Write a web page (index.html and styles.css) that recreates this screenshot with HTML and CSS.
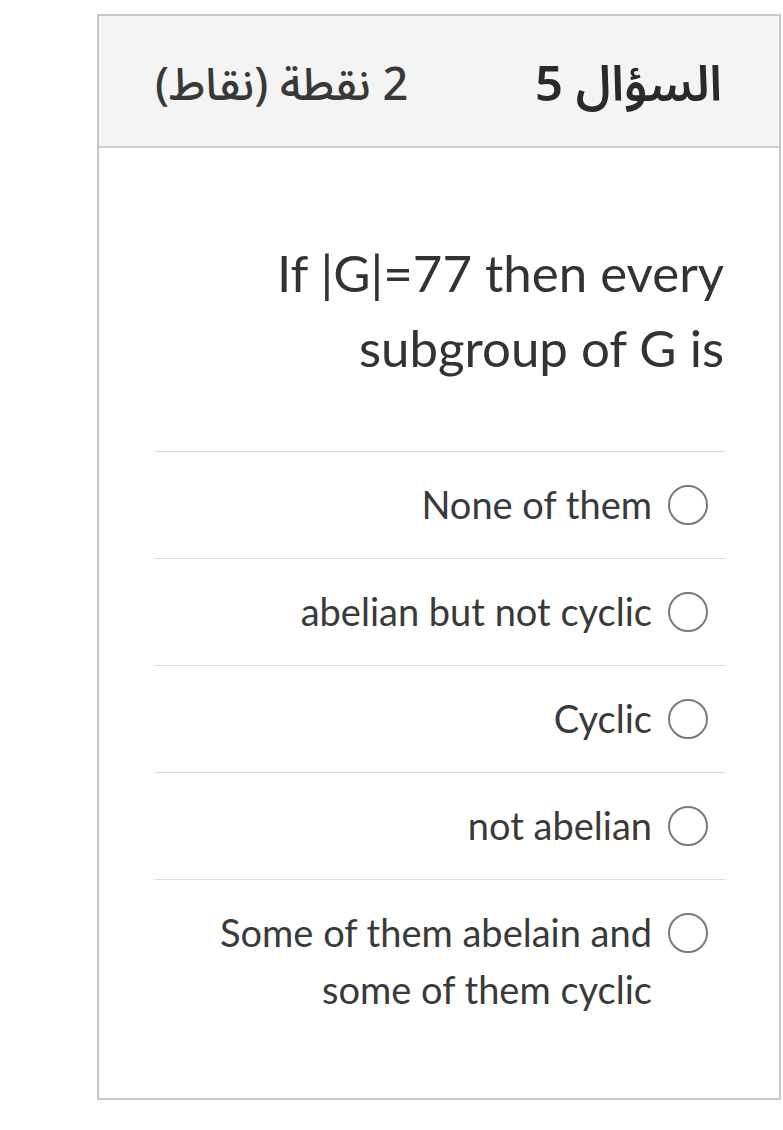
FILE: index.html
```html
<!DOCTYPE html>
<html lang="ar">
<head>
<meta charset="utf-8">
<link rel="stylesheet" href="styles.css">
</head>
<body>
<div class="page">
  <div class="card">
    <div class="card-header" dir="rtl">
      <div class="q-title">السؤال 5</div>
      <div class="q-points">2 نقطة (نقاط)</div>
    </div>
    <div class="card-body">
      <div class="question" dir="ltr">If |G|=77 then every<br>subgroup of G is</div>
      <div class="options">
        <label class="option"><span class="opt-text">None of them</span><span class="radio"></span></label>
        <label class="option"><span class="opt-text">abelian but not cyclic</span><span class="radio"></span></label>
        <label class="option"><span class="opt-text">Cyclic</span><span class="radio"></span></label>
        <label class="option"><span class="opt-text">not abelian</span><span class="radio"></span></label>
        <label class="option"><span class="opt-text">Some of them abelain and<br>some of them cyclic</span><span class="radio"></span></label>
      </div>
    </div>
  </div>
</div>
</body>
</html>
```

FILE: styles.css
```css
html, body {
  margin: 0;
  padding: 0;
  background: #ffffff;
}
.page {
  padding: 14px 2px 0 97px;
  font-family: "Lato", "Noto Sans Arabic", "DejaVu Sans", sans-serif;
  color: #333333;
}
.card {
  border: 2px solid #c8c8c8;
  background: #ffffff;
  height: 1086px;
  box-sizing: border-box;
}
.card-header {
  height: 132px;
  box-sizing: border-box;
  background: #f4f4f4;
  border-bottom: 2px solid #cfcfcf;
  display: flex;
  align-items: center;
  justify-content: space-between;
  padding: 8px 57px 0 56px;
  font-family: "Noto Sans Arabic", "DejaVu Sans", "Lato", sans-serif;
}
.q-title {
  font-size: 49px;
  font-weight: 600;
  color: #2a2a2a;
}
.q-points {
  font-size: 45px;
  font-weight: 500;
  color: #383838;
}
.card-body {
  padding: 0 54px 0 56px;
}
.question {
  padding-top: 87px;
  padding-right: 1px;
  margin-bottom: 66px;
  text-align: right;
  font-size: 51px;
  line-height: 75px;
  color: #333333;
}
.option {
  display: flex;
  justify-content: flex-end;
  align-items: flex-start;
  gap: 16px;
  border-top: 1px solid #dcdcdc;
  padding: 24px 17px 25px 0;
}
.opt-text {
  font-size: 38px;
  line-height: 57px;
  text-align: right;
  color: #3a3a3a;
}
.radio {
  flex: none;
  width: 40px;
  height: 40px;
  margin-top: 9px;
  box-sizing: border-box;
  border: 2px solid #7a7a7a;
  border-radius: 50%;
  background: #ffffff;
}
```
